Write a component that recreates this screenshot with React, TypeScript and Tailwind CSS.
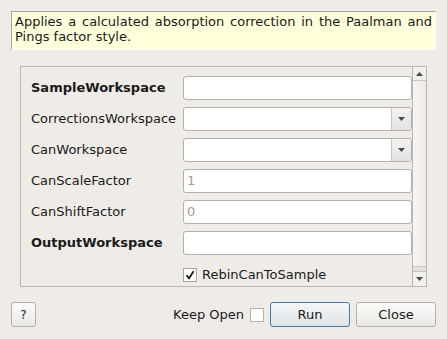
import React from "react";

const font = { fontFamily: '"DejaVu Sans", Verdana, sans-serif' };

function Arrow({ up }: { up?: boolean }) {
  return (
    <svg width="7" height="4" viewBox="0 0 7 4" className="block">
      {up ? <path d="M0 4 L3.5 0 L7 4 Z" fill="#4a4a4a" /> : <path d="M0 0 L7 0 L3.5 4 Z" fill="#4a4a4a" />}
    </svg>
  );
}

function Check() {
  return (
    <svg width="10" height="10" viewBox="0 0 10 10" className="block">
      <path d="M1.5 5.2 L4 8.3 L8.6 1.2" fill="none" stroke="#111" strokeWidth="1.8" />
    </svg>
  );
}

function TextBox({ value }: { value?: string }) {
  return (
    <div className="h-[24px] rounded-[3px] border border-[#b4b0ac] bg-white flex items-center px-[3px] text-[#a09c98]">
      {value}
    </div>
  );
}

function Combo() {
  return (
    <div className="h-[24px] rounded-[3px] border border-[#b4b0ac] bg-white flex">
      <div className="flex-1" />
      <div className="w-[20px] border-l border-[#c8c4c0] bg-gradient-to-b from-[#f4f3f2] to-[#e4e2e0] rounded-r-[3px] flex items-center justify-center">
        <Arrow />
      </div>
    </div>
  );
}

const rows: { label: string; bold?: boolean; kind: "text" | "combo"; value?: string }[] = [
  { label: "SampleWorkspace", bold: true, kind: "text" },
  { label: "CorrectionsWorkspace", kind: "combo" },
  { label: "CanWorkspace", kind: "combo" },
  { label: "CanScaleFactor", kind: "text", value: "1" },
  { label: "CanShiftFactor", kind: "text", value: "0" },
  { label: "OutputWorkspace", bold: true, kind: "text" },
];

export default function App() {
  return (
    <div className="w-[447px] h-[339px] bg-[#efebe7] text-[13px] text-[#1a1a1a] flex flex-col" style={font}>
      <div className="mx-[11px] mt-[11px] h-[39px] border border-t-[#a8a4a0] border-l-[#a8a4a0] border-r-white border-b-white bg-[#ffffdc] px-[3px] pt-[2px] leading-[15px] text-justify">
        Applies a calculated absorption correction in the Paalman and Pings factor style.
      </div>

      <div className="mx-[20px] mt-[16px] h-[221px] border border-[#bab6b2] flex">
        <div className="flex-1 pl-[10px] pt-[9px]">
          <div className="grid grid-cols-[152px_1fr] gap-y-[7px]">
            {rows.map((r) => (
              <React.Fragment key={r.label}>
                <div className={"h-[24px] flex items-center whitespace-nowrap " + (r.bold ? "font-bold" : "")}>
                  {r.label}
                </div>
                {r.kind === "combo" ? <Combo /> : <TextBox value={r.value} />}
              </React.Fragment>
            ))}
            <div />
            <div className="h-[24px] flex items-center gap-[5px] pt-[2px]">
              <div className="w-[14px] h-[14px] border border-[#a8a4a0] bg-white flex items-center justify-center">
                <Check />
              </div>
              <span>RebinCanToSample</span>
            </div>
          </div>
        </div>
        <div className="w-[14px] border-l border-[#bab6b2] flex flex-col">
          <div className="h-[14px] border-b border-[#c8c4c0] bg-[#f2f0ee] flex items-center justify-center">
            <Arrow up />
          </div>
          <div className="flex-1 bg-gradient-to-r from-[#f7f6f5] to-[#eceae8]" />
          <div className="h-[6px] border-t border-b border-[#c8c4c0] bg-[#e4e1de]" />
          <div className="h-[14px] bg-[#f2f0ee] flex items-center justify-center">
            <Arrow />
          </div>
        </div>
      </div>

      <div className="mt-[15px] mx-[11px] flex items-center h-[25px]">
        <div className="w-[25px] h-[25px] rounded-[3px] border border-[#b4b0ac] bg-gradient-to-b from-[#fbfbfa] to-[#ebe9e7] flex items-center justify-center text-[12px]">
          ?
        </div>
        <div className="flex-1" />
        <span>Keep Open</span>
        <div className="ml-[6px] w-[14px] h-[14px] border border-[#b4b0ac] bg-white" />
        <div className="ml-[6px] w-[80px] h-[25px] rounded-[3px] border border-[#3d7cb5] bg-gradient-to-b from-[#f5f6f7] to-[#dfe3e7] flex items-center justify-center">
          Run
        </div>
        <div className="ml-[6px] w-[80px] h-[25px] rounded-[3px] border border-[#b4b0ac] bg-gradient-to-b from-[#fbfbfa] to-[#ebe9e7] flex items-center justify-center">
          Close
        </div>
      </div>
    </div>
  );
}
